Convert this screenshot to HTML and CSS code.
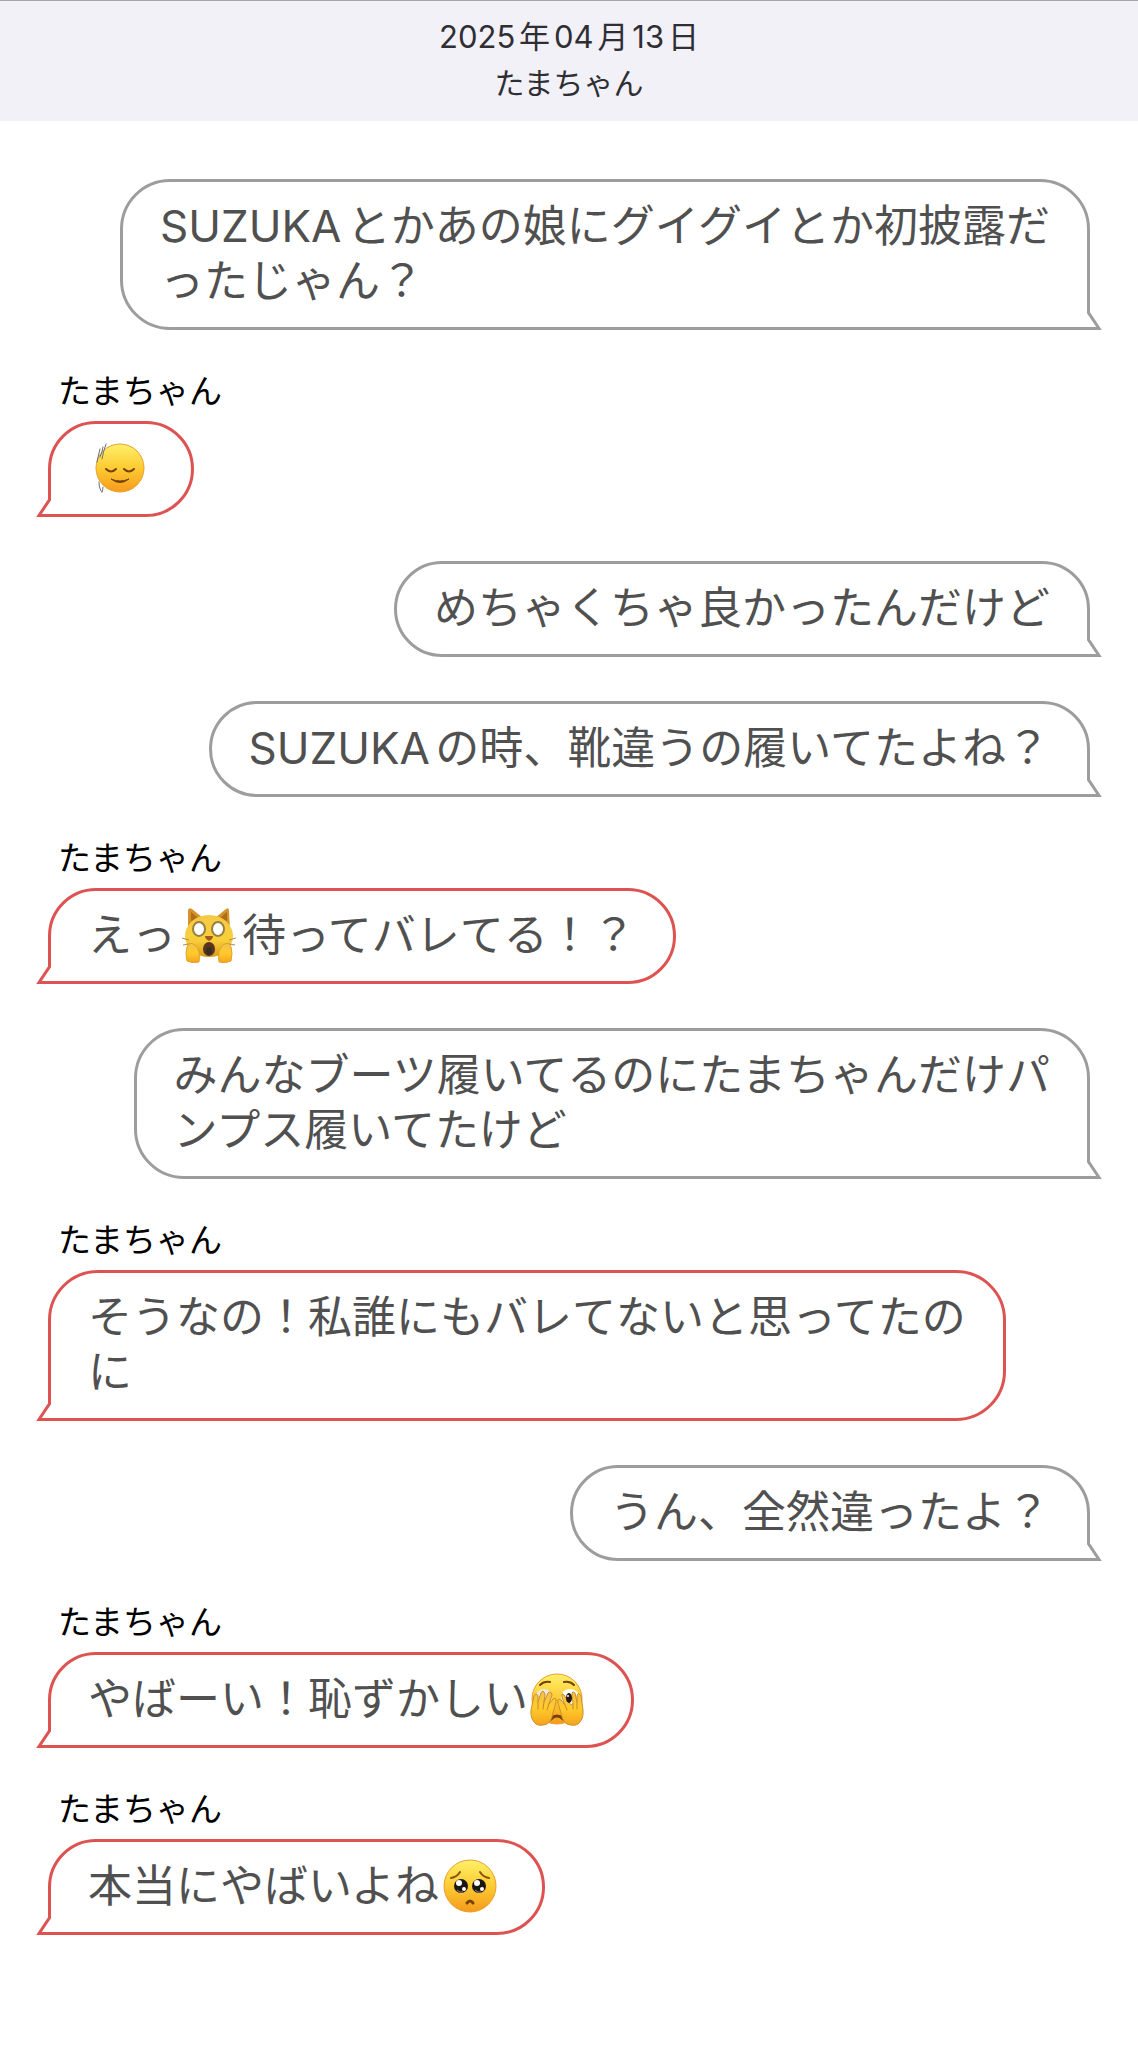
FILE: index.html
```html
<!DOCTYPE html>
<html lang="ja">
<head>
<meta charset="utf-8">
<meta name="viewport" content="width=device-width, initial-scale=1">
<title>たまちゃん</title>
<link rel="stylesheet" href="styles.css">
</head>
<body>
<svg class="defs" aria-hidden="true">
  <defs>
    <symbol id="tail" viewBox="0 0 15 18">
      <path d="M0 0H3L14 18H0Z" fill="#fff"/>
      <path d="M1 -2V0L12 16.500H0" fill="none" stroke="currentColor" stroke-width="3" stroke-miterlimit="8"/>
    </symbol>
    <linearGradient id="face" x1="0" y1="0" x2="0" y2="1">
      <stop offset="0" stop-color="#fff06a"/><stop offset=".5" stop-color="#fdcb32"/><stop offset="1" stop-color="#f59a1c"/>
    </linearGradient>
    <linearGradient id="fur" x1="0" y1="0" x2="0" y2="1">
      <stop offset="0" stop-color="#f6c945"/><stop offset=".6" stop-color="#f8cf3a"/><stop offset="1" stop-color="#d99a1c"/>
    </linearGradient>
    <linearGradient id="hand" x1="0" y1="0" x2="0" y2="1">
      <stop offset="0" stop-color="#f2c24a"/><stop offset=".5" stop-color="#ffcb2c"/><stop offset="1" stop-color="#f6a21e"/>
    </linearGradient>
  </defs>
</svg>

<header class="header">
  <time class="date" datetime="2025-04-13">2025年04月13日</time>
  <h1 class="title">たまちゃん</h1>
</header>

<main class="chat">
  <article class="message mine">
    <p class="bubble">SUZUKAとかあの娘にグイグイとか初披露だ<br>ったじゃん？<svg class="tail" aria-hidden="true"><use href="#tail"/></svg></p>
  </article>

  <article class="message theirs">
    <h2 class="name">たまちゃん</h2>
    <p class="bubble"><svg class="emoji emoji-calm" viewBox="2 0 66 52" role="img" aria-label="微笑む顔">
      <circle cx="34" cy="27" r="24" fill="url(#face)" stroke="#e9a02c"/>
      <path d="M20 28q5 5 10 0M38 28q5 5 10 0" fill="none" stroke="#74430c" stroke-width="2" stroke-linecap="round"/>
      <path d="M25 38q9 7 18 0q-9 4-18 0z" fill="#74430c" stroke="#74430c" stroke-linejoin="round"/>
      <path d="M14 8q-2 8-3 13M17 6q-1 6-3 10M20 3q-3 8-4 15M13 41q0 7 3 10M17 46q0 3-1 5" fill="none" stroke="#6b6d7b" stroke-width="1" stroke-linecap="round"/>
    </svg><svg class="tail" aria-hidden="true"><use href="#tail"/></svg></p>
  </article>

  <article class="message mine">
    <p class="bubble">めちゃくちゃ良かったんだけど<svg class="tail" aria-hidden="true"><use href="#tail"/></svg></p>
  </article>

  <article class="message mine">
    <p class="bubble">SUZUKAの時、靴違うの履いてたよね？<svg class="tail" aria-hidden="true"><use href="#tail"/></svg></p>
  </article>

  <article class="message theirs">
    <h2 class="name">たまちゃん</h2>
    <p class="bubble">えっ<svg class="emoji" viewBox="0 0 66 56" role="img" aria-label="驚いた猫の顔">
      <path d="M12 24L12 3Q13 0 16 2L27 11H39L50 2Q53 0 53 4L54 24Z" fill="#d3922a"/>
      <path d="M15 14V5L22 11ZM51 14V5L44 11Z" fill="#b06d18"/>
      <ellipse cx="33" cy="29" rx="24" ry="21" fill="url(#fur)"/>
      <path d="M13 33L6 31M13 37L7 38M53 33L60 31M53 37L59 38" stroke="#a98d52" stroke-width="1"/>
      <ellipse cx="23" cy="22" rx="6" ry="7" fill="#fff" stroke="#98813c" stroke-width="2"/>
      <ellipse cx="42" cy="22" rx="6" ry="7" fill="#fff" stroke="#98813c" stroke-width="2"/>
      <path d="M29 29h8q0 3-4 5q-4-2-4-5z" fill="#a8571d"/>
      <ellipse cx="33" cy="42" rx="6" ry="7" fill="#59341f"/>
      <ellipse cx="33" cy="44" rx="3" ry="4" fill="#3a2c28"/>
      <path d="M11 54Q9 46 11 40Q13 34 19 38Q25 43 23 55Q17 57 11 54Z" fill="url(#hand)" stroke="#dfa32a"/>
      <path d="M55 54Q57 46 55 40Q53 34 47 38Q41 43 43 55Q49 57 55 54Z" fill="url(#hand)" stroke="#dfa32a"/>
    </svg>待ってバレてる！？<svg class="tail" aria-hidden="true"><use href="#tail"/></svg></p>
  </article>

  <article class="message mine">
    <p class="bubble">みんなブーツ履いてるのにたまちゃんだけパ<br>ンプス履いてたけど<svg class="tail" aria-hidden="true"><use href="#tail"/></svg></p>
  </article>

  <article class="message theirs">
    <h2 class="name">たまちゃん</h2>
    <p class="bubble">そうなの！私誰にもバレてないと思ってたの<br>に<svg class="tail" aria-hidden="true"><use href="#tail"/></svg></p>
  </article>

  <article class="message mine">
    <p class="bubble">うん、全然違ったよ？<svg class="tail" aria-hidden="true"><use href="#tail"/></svg></p>
  </article>

  <article class="message theirs">
    <h2 class="name">たまちゃん</h2>
    <p class="bubble">やばーい！恥ずかしい<svg class="emoji" viewBox="4 0 66 56" role="img" aria-label="指の間からのぞく顔">
      <circle cx="33" cy="28" r="25" fill="url(#face)" stroke="#e9a02c"/>
      <path d="M16 14q4-4 10-3M40 11q6-1 10 3" fill="none" stroke="#74430c" stroke-width="2" stroke-linecap="round"/>
      <ellipse cx="20" cy="26" rx="8" ry="8" fill="#eee8dc"/>
      <ellipse cx="46" cy="26" rx="9" ry="8" fill="#fff"/>
      <path d="M27 48q6-6 12 0" fill="none" stroke="#74430c" stroke-width="3" stroke-linecap="round"/>
      <path d="M12 53Q6 48 7 39L10 25Q12 21 14 25L14 31L17 22Q19 18 21 23L20 31L24 22Q27 19 28 24L25 33L29 28Q33 26 32 31L29 42Q27 54 19 54Q15 55 12 53Z" fill="url(#hand)" stroke="#cf8f26"/>
      <path d="M54 53Q60 48 59 39L57 25Q54 20 53 25L53 31L51 22Q48 19 48 24L49 32Q48 35 46 33L40 24Q37 21 38 26L41 34L37 29Q33 27 34 32L37 42Q39 54 47 54Q51 55 54 53Z" fill="url(#hand)" stroke="#cf8f26"/>
      <path d="M14 31V38M20 31L19 38M25 33L23 39M53 31V38M49 33V38M41 34L43 39" stroke="#c98522" stroke-linecap="round"/>
      <ellipse cx="45" cy="27" rx="3" ry="5" fill="#2b1a12"/>
      <circle cx="44" cy="25" r="1" fill="#fff"/>
    </svg><svg class="tail" aria-hidden="true"><use href="#tail"/></svg></p>
  </article>

  <article class="message theirs">
    <h2 class="name">たまちゃん</h2>
    <p class="bubble">本当にやばいよね<svg class="emoji" viewBox="2 0 66 56" role="img" aria-label="訴えかける顔">
      <circle cx="33" cy="28" r="26" fill="url(#face)" stroke="#e9a02c"/>
      <path d="M14 20q6-1 9-6M43 14q3 5 9 6" fill="none" stroke="#8a5310" stroke-width="2" stroke-linecap="round"/>
      <circle cx="24" cy="28" r="7" fill="#1d1714"/><circle cx="42" cy="28" r="7" fill="#1d1714"/>
      <circle cx="22" cy="25" r="3" fill="#fff"/><circle cx="40" cy="25" r="3" fill="#fff"/>
      <circle cx="27" cy="31" r="2" fill="#fff"/><circle cx="45" cy="31" r="2" fill="#fff"/>
      <path d="M20 32q3 3 6 2M38 32q3 3 6 2" fill="none" stroke="#8c8580" stroke-width="1"/>
      <path d="M30 45q3-4 6 0" fill="none" stroke="#74430c" stroke-width="3" stroke-linecap="round"/>
    </svg><svg class="tail" aria-hidden="true"><use href="#tail"/></svg></p>
  </article>
</main>
</body>
</html>
```
FILE: styles.css
```css
* {
  box-sizing: border-box;
}

body {
  margin: 0;
  background: #fff;
  font-family: Inter, "Noto Sans CJK JP", sans-serif;
  text-autospace: normal;
}

h1,
h2,
p {
  margin: 0;
  font-weight: 400;
}

.defs {
  display: block;
  width: 0;
  height: 0;
}

.header {
  display: flex;
  flex-direction: column;
  align-items: center;
  padding: 12px 16px 14px;
  border-top: 1px solid #a5a3ab;
  background: #f2f1f8;
  color: #2f2e33;
  line-height: 47px;
}

.date {
  font-size: 31px;
}

.title {
  font-size: 30px;
}

.chat {
  display: flex;
  flex-direction: column;
  gap: 44px;
  padding: 58px 48px 112px;
}

.message {
  display: flex;
  flex-direction: column;
  align-items: flex-start;
}

.mine {
  align-items: flex-end;
}

.name {
  margin-bottom: 13px;
  padding-left: 10px;
  color: #000;
  font-size: 33px;
  line-height: 34px;
}

.bubble {
  position: relative;
  padding: 17px 37px 18px;
  border: 3px solid currentColor;
  border-radius: 50px;
  color: #dd5352;
  font-size: 44px;
  line-height: 55px;
  -webkit-text-fill-color: #505050;
}

.mine .bubble {
  border-bottom-right-radius: 0;
  color: #9e9d9e;
}

.theirs .bubble {
  border-bottom-left-radius: 0;
}

.tail {
  position: absolute;
  right: -15px;
  bottom: -3px;
  width: 15px;
  height: 18px;
}

.theirs .tail {
  right: auto;
  left: -15px;
  transform: scaleX(-1);
}

.emoji {
  width: 66px;
  height: 56px;
  margin-top: -16px;
  vertical-align: -12px;
}

.emoji-calm {
  height: 52px;
  vertical-align: -9px;
}
```
